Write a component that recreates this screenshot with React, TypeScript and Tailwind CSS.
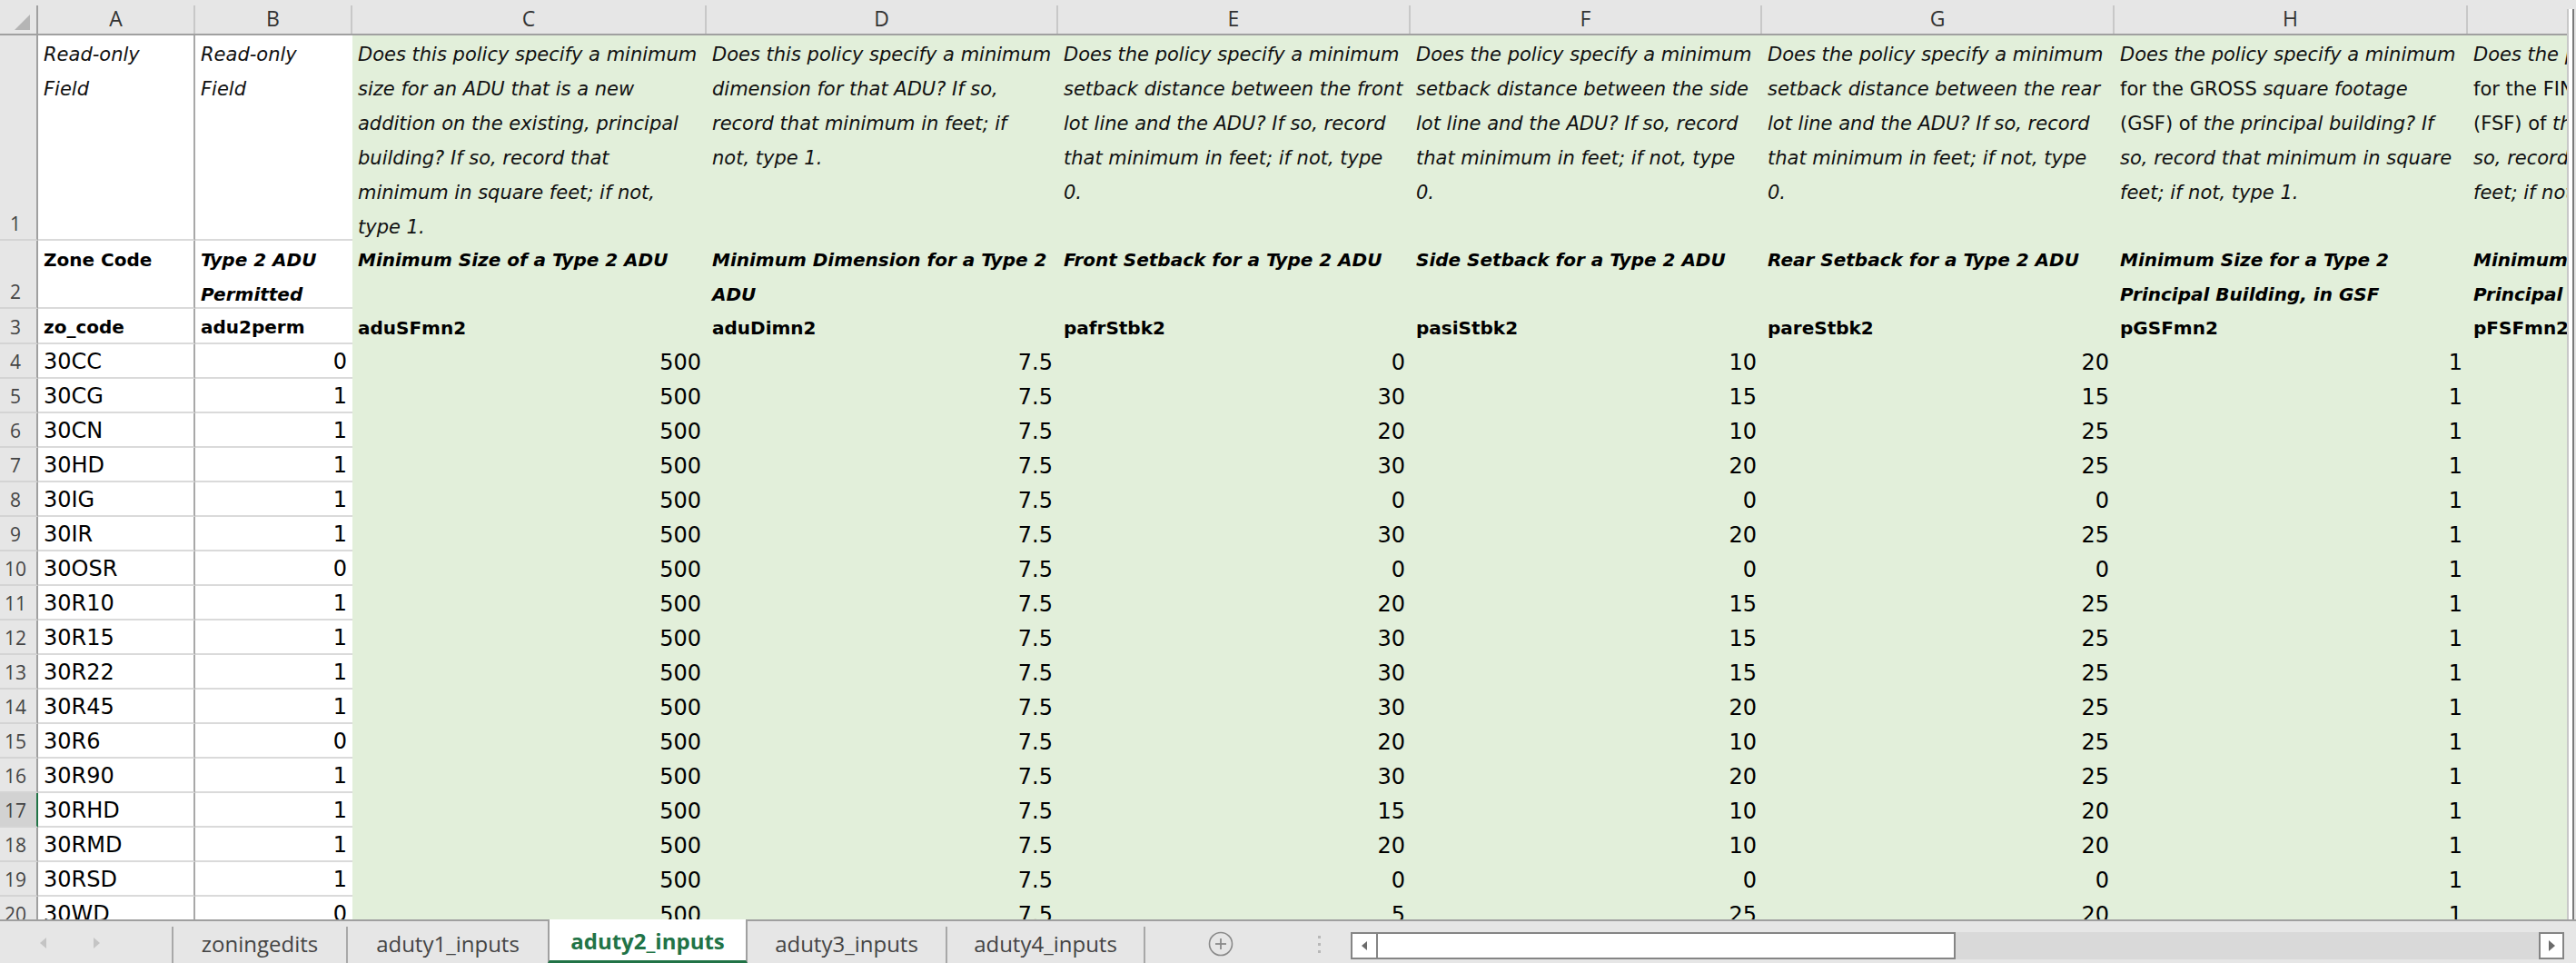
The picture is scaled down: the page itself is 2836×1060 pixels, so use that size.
import React from 'react';

const W = [
  'w-[173px] min-w-[173px]',
  'w-[173px] min-w-[173px]',
  'w-[390px] min-w-[390px]',
  'w-[387px] min-w-[387px]',
  'w-[388px] min-w-[388px]',
  'w-[387px] min-w-[387px]',
  'w-[388px] min-w-[388px]',
  'w-[389px] min-w-[389px]',
  'w-[388px] min-w-[388px]',
];
const LETTERS = ['A', 'B', 'C', 'D', 'E', 'F', 'G', 'H', 'I'];

const I = ({ children }: { children: React.ReactNode }) => <span className="not-italic">{children}</span>;

const ROW1: React.ReactNode[][] = [
  ['Read-only', 'Field'],
  ['Read-only', 'Field'],
  [
    'Does this policy specify a minimum',
    'size for an ADU that is a new',
    'addition on the existing, principal',
    'building? If so, record that',
    'minimum in square feet; if not,',
    'type 1.',
  ],
  ['Does this policy specify a minimum', 'dimension for that ADU? If so,', 'record that minimum in feet; if', 'not, type 1.'],
  [
    'Does the policy specify a minimum',
    'setback distance between the front',
    'lot line and the ADU? If so, record',
    'that minimum in feet; if not, type',
    '0.',
  ],
  [
    'Does the policy specify a minimum',
    'setback distance between the side',
    'lot line and the ADU? If so, record',
    'that minimum in feet; if not, type',
    '0.',
  ],
  [
    'Does the policy specify a minimum',
    'setback distance between the rear',
    'lot line and the ADU? If so, record',
    'that minimum in feet; if not, type',
    '0.',
  ],
  [
    'Does the policy specify a minimum',
    <>
      <I>for the GROSS</I> square footage
    </>,
    <>
      <I>(GSF) of</I> the principal building? If
    </>,
    'so, record that minimum in square',
    'feet; if not, type 1.',
  ],
  [
    'Does the policy specify a minimum',
    <>
      <I>for the FINISHED</I> square footage
    </>,
    <>
      <I>(FSF) of</I> the principal building? If
    </>,
    'so, record that minimum in square',
    'feet; if not, type 1.',
  ],
];

const ROW2: string[][] = [
  ['Zone Code'],
  ['Type 2 ADU', 'Permitted'],
  ['Minimum Size of a Type 2 ADU'],
  ['Minimum Dimension for a Type 2', 'ADU'],
  ['Front Setback for a Type 2 ADU'],
  ['Side Setback for a Type 2 ADU'],
  ['Rear Setback for a Type 2 ADU'],
  ['Minimum Size for a Type 2', 'Principal Building, in GSF'],
  ['Minimum Size for a Type 2', 'Principal Building, in FSF'],
];

const ROW3 = ['zo_code', 'adu2perm', 'aduSFmn2', 'aduDimn2', 'pafrStbk2', 'pasiStbk2', 'pareStbk2', 'pGSFmn2', 'pFSFmn2'];

const DATA: string[][] = [
  ['4', '30CC', '0', '500', '7.5', '0', '10', '20', '1'],
  ['5', '30CG', '1', '500', '7.5', '30', '15', '15', '1'],
  ['6', '30CN', '1', '500', '7.5', '20', '10', '25', '1'],
  ['7', '30HD', '1', '500', '7.5', '30', '20', '25', '1'],
  ['8', '30IG', '1', '500', '7.5', '0', '0', '0', '1'],
  ['9', '30IR', '1', '500', '7.5', '30', '20', '25', '1'],
  ['10', '30OSR', '0', '500', '7.5', '0', '0', '0', '1'],
  ['11', '30R10', '1', '500', '7.5', '20', '15', '25', '1'],
  ['12', '30R15', '1', '500', '7.5', '30', '15', '25', '1'],
  ['13', '30R22', '1', '500', '7.5', '30', '15', '25', '1'],
  ['14', '30R45', '1', '500', '7.5', '30', '20', '25', '1'],
  ['15', '30R6', '0', '500', '7.5', '20', '10', '25', '1'],
  ['16', '30R90', '1', '500', '7.5', '30', '20', '25', '1'],
  ['17', '30RHD', '1', '500', '7.5', '15', '10', '20', '1'],
  ['18', '30RMD', '1', '500', '7.5', '20', '10', '20', '1'],
  ['19', '30RSD', '1', '500', '7.5', '0', '0', '0', '1'],
  ['20', '30WD', '0', '500', '7.5', '5', '25', '20', '1'],
];

function cellBg(ci: number) {
  if (ci === 0) return 'bg-white border-b-2 border-b-[#dadada] border-r-2 border-r-[#a8a8a8]';
  if (ci === 1) return 'bg-white border-b-2 border-b-[#dadada]';
  return 'bg-[#e2efda]';
}

function RowHead({ label, h, bottom, selected }: { label: string; h: string; bottom?: boolean; selected?: boolean }) {
  return (
    <div
      className={`w-[42px] min-w-[42px] ${h} border-r-2 border-b-2 border-b-[#d4d4d4] ${
        selected ? 'bg-[#d2d2d2] border-r-[#217346]' : 'bg-[#e6e6e6] border-r-[#a0a0a0]'
      } flex ${bottom ? 'items-end pb-[0px]' : 'items-center pt-[2px]'} justify-center pr-[6px] font-['Open_Sans',sans-serif] text-[21px] leading-[34px] text-[#444]`}
    >
      {label}
    </div>
  );
}

export default function App() {
  return (
    <div className="w-[2836px] h-[1060px] overflow-hidden flex flex-col bg-white">
      <div className="flex h-[1012px] min-h-[1012px]">
        <div className="w-[2826px] min-w-[2826px] overflow-hidden flex flex-col">
          {/* column header */}
          <div className="flex h-[39px] min-h-[39px] bg-[#e6e6e6] border-b-2 border-[#a0a0a0] font-['Open_Sans',sans-serif] text-[23px] text-[#333]">
            <div className="w-[42px] min-w-[42px] flex flex-col">
              <div className="mt-[6px] flex-1 border-r-2 border-[#a0a0a0] flex items-end justify-end pr-[7px] pb-[4px]">
                <svg width="17" height="17" viewBox="0 0 17 17">
                  <polygon points="17,0 17,17 0,17" fill="#b5b5b5" />
                </svg>
              </div>
            </div>
            {LETTERS.map((l, i) => (
              <div key={l} className={`${W[i]} flex flex-col`}>
                <div className="mt-[6px] flex-1 border-r-2 border-[#c8c8c8] flex items-center justify-center leading-none pb-[2px]">
                  {l}
                </div>
              </div>
            ))}
          </div>

          {/* row 1 */}
          <div className="flex h-[226px] min-h-[226px]">
            <RowHead label="1" h="h-[226px]" bottom />
            {ROW1.map((lines, ci) => (
              <div
                key={ci}
                className={`${W[ci]} h-[226px] ${cellBg(ci)} overflow-hidden pl-[6px] pt-[2px] font-['DejaVu_Sans',sans-serif] italic text-[21px] leading-[38px] text-[#111] whitespace-nowrap`}
              >
                {lines.map((ln, li) => (
                  <div key={li}>{ln}</div>
                ))}
              </div>
            ))}
          </div>

          {/* row 2 */}
          <div className="flex h-[75px] min-h-[75px]">
            <RowHead label="2" h="h-[75px]" bottom />
            {ROW2.map((lines, ci) => (
              <div
                key={ci}
                className={`${W[ci]} h-[75px] ${cellBg(ci)} overflow-hidden pl-[6px] pt-[2px] font-['DejaVu_Sans',sans-serif] font-bold ${
                  ci === 0 ? '' : 'italic'
                } text-[20px] leading-[38px] text-black whitespace-nowrap`}
              >
                {lines.map((ln, li) => (
                  <div key={li}>{ln}</div>
                ))}
              </div>
            ))}
          </div>

          {/* row 3 */}
          <div className="flex h-[39px] min-h-[39px]">
            <RowHead label="3" h="h-[39px]" />
            {ROW3.map((t, ci) => (
              <div
                key={ci}
                className={`${W[ci]} h-[39px] ${cellBg(ci)} overflow-hidden pl-[6px] pt-[3px] flex items-center font-['DejaVu_Sans',sans-serif] font-bold text-[20px] text-black whitespace-nowrap`}
              >
                {t}
              </div>
            ))}
          </div>

          {/* data rows */}
          {DATA.map((r) => (
            <div key={r[0]} className="flex h-[38px] min-h-[38px]">
              <RowHead label={r[0]} h="h-[38px]" selected={r[0] === '17'} />
              {r.slice(1).map((v, ci) => (
                <div
                  key={ci}
                  className={`${W[ci]} h-[38px] ${cellBg(ci)} overflow-hidden flex items-center pt-[2px] ${
                    ci === 0 ? 'justify-start pl-[6px]' : 'justify-end pr-[6px]'
                  } font-['DejaVu_Sans',sans-serif] text-[24px] text-black whitespace-nowrap`}
                >
                  {v}
                </div>
              ))}
              <div className={`${W[8]} h-[38px] bg-[#e2efda]`} />
            </div>
          ))}
        </div>
        {/* vertical scrollbar edge */}
        <div className="w-[10px] min-w-[10px] bg-[#e6e6e6] flex flex-col">
          <div className="h-[10px]" />
          <div className="flex-1 flex">
            <div className="w-[6px] bg-white border-l-2 border-[#c8c8c8]" />
            <div className="w-[2px] bg-[#7a7a7a]" />
            <div className="w-[2px]" />
          </div>
        </div>
      </div>

      {/* sheet tab bar */}
      <div className="flex h-[48px] min-h-[48px] bg-[#e6e6e6] font-['Open_Sans',sans-serif] text-[24px] text-[#444]">
        <div className="w-[191px] min-w-[191px] border-t-2 border-[#a0a0a0] flex flex-col">
          <div className="mt-[6px] flex-1 border-r-2 border-[#a8a8a8] flex items-center pl-[44px] gap-[52px] pb-[4px]">
            <svg width="7" height="12" viewBox="0 0 7 12">
              <polygon points="7,0 7,12 0,6" fill="#c4c4c4" />
            </svg>
            <svg width="7" height="12" viewBox="0 0 7 12">
              <polygon points="0,0 0,12 7,6" fill="#c4c4c4" />
            </svg>
          </div>
        </div>
        <div className="w-[192px] min-w-[192px] border-t-2 border-[#a0a0a0] flex flex-col">
          <div className="mt-[6px] flex-1 border-r-2 border-[#a8a8a8] flex items-center justify-center pb-[2px]">zoningedits</div>
        </div>
        <div className="w-[220px] min-w-[220px] border-t-2 border-[#a0a0a0] flex flex-col">
          <div className="mt-[6px] flex-1 flex items-center justify-center pb-[2px]">aduty1_inputs</div>
        </div>
        <div className="w-[220px] min-w-[220px] bg-white border-l-2 border-r-2 border-[#a0a0a0] border-b-[3px] border-b-[#217346] flex items-center justify-center pt-[2px] font-bold text-[#217346]">
          aduty2_inputs
        </div>
        <div className="w-[220px] min-w-[220px] border-t-2 border-[#a0a0a0] flex flex-col">
          <div className="mt-[6px] flex-1 border-r-2 border-[#a8a8a8] flex items-center justify-center pb-[2px]">aduty3_inputs</div>
        </div>
        <div className="w-[218px] min-w-[218px] border-t-2 border-[#a0a0a0] flex flex-col">
          <div className="mt-[6px] flex-1 border-r-2 border-[#a8a8a8] flex items-center justify-center pb-[2px]">aduty4_inputs</div>
        </div>
        <div className="flex-1 border-t-2 border-[#a0a0a0] flex items-start">
          <div className="w-[226px] min-w-[226px] h-full flex items-center">
            <div className="ml-[68px] mt-[4px]">
              <svg width="30" height="30" viewBox="0 0 30 30">
                <circle cx="15" cy="15" r="12.5" fill="none" stroke="#8a8a8a" strokeWidth="1.6" />
                <line x1="15" y1="9" x2="15" y2="21" stroke="#8a8a8a" strokeWidth="1.8" />
                <line x1="9" y1="15" x2="21" y2="15" stroke="#8a8a8a" strokeWidth="1.8" />
              </svg>
            </div>
            <div className="ml-[92px] mt-[4px] flex flex-col gap-[5px]">
              <div className="w-[3px] h-[3px] bg-[#b8b8b8]" />
              <div className="w-[3px] h-[3px] bg-[#b8b8b8]" />
              <div className="w-[3px] h-[3px] bg-[#b8b8b8]" />
            </div>
          </div>
          <div className="mt-[12px] flex-1 flex h-[30px] bg-[#d9d9d9] mr-[13px]">
            <div className="w-[30px] min-w-[30px] h-[30px] bg-white border-2 border-[#858585] flex items-center justify-center">
              <svg width="6" height="10" viewBox="0 0 6 10">
                <polygon points="6,0 6,10 0,5" fill="#6b6b6b" />
              </svg>
            </div>
            <div className="w-[636px] min-w-[636px] h-[30px] bg-white border-2 border-l-0 border-[#858585]" />
            <div className="flex-1" />
            <div className="w-[28px] min-w-[28px] h-[30px] bg-white border-2 border-[#858585] flex items-center justify-center">
              <svg width="7" height="12" viewBox="0 0 7 12">
                <polygon points="0,0 0,12 7,6" fill="#6b6b6b" />
              </svg>
            </div>
          </div>
        </div>
      </div>
    </div>
  );
}
